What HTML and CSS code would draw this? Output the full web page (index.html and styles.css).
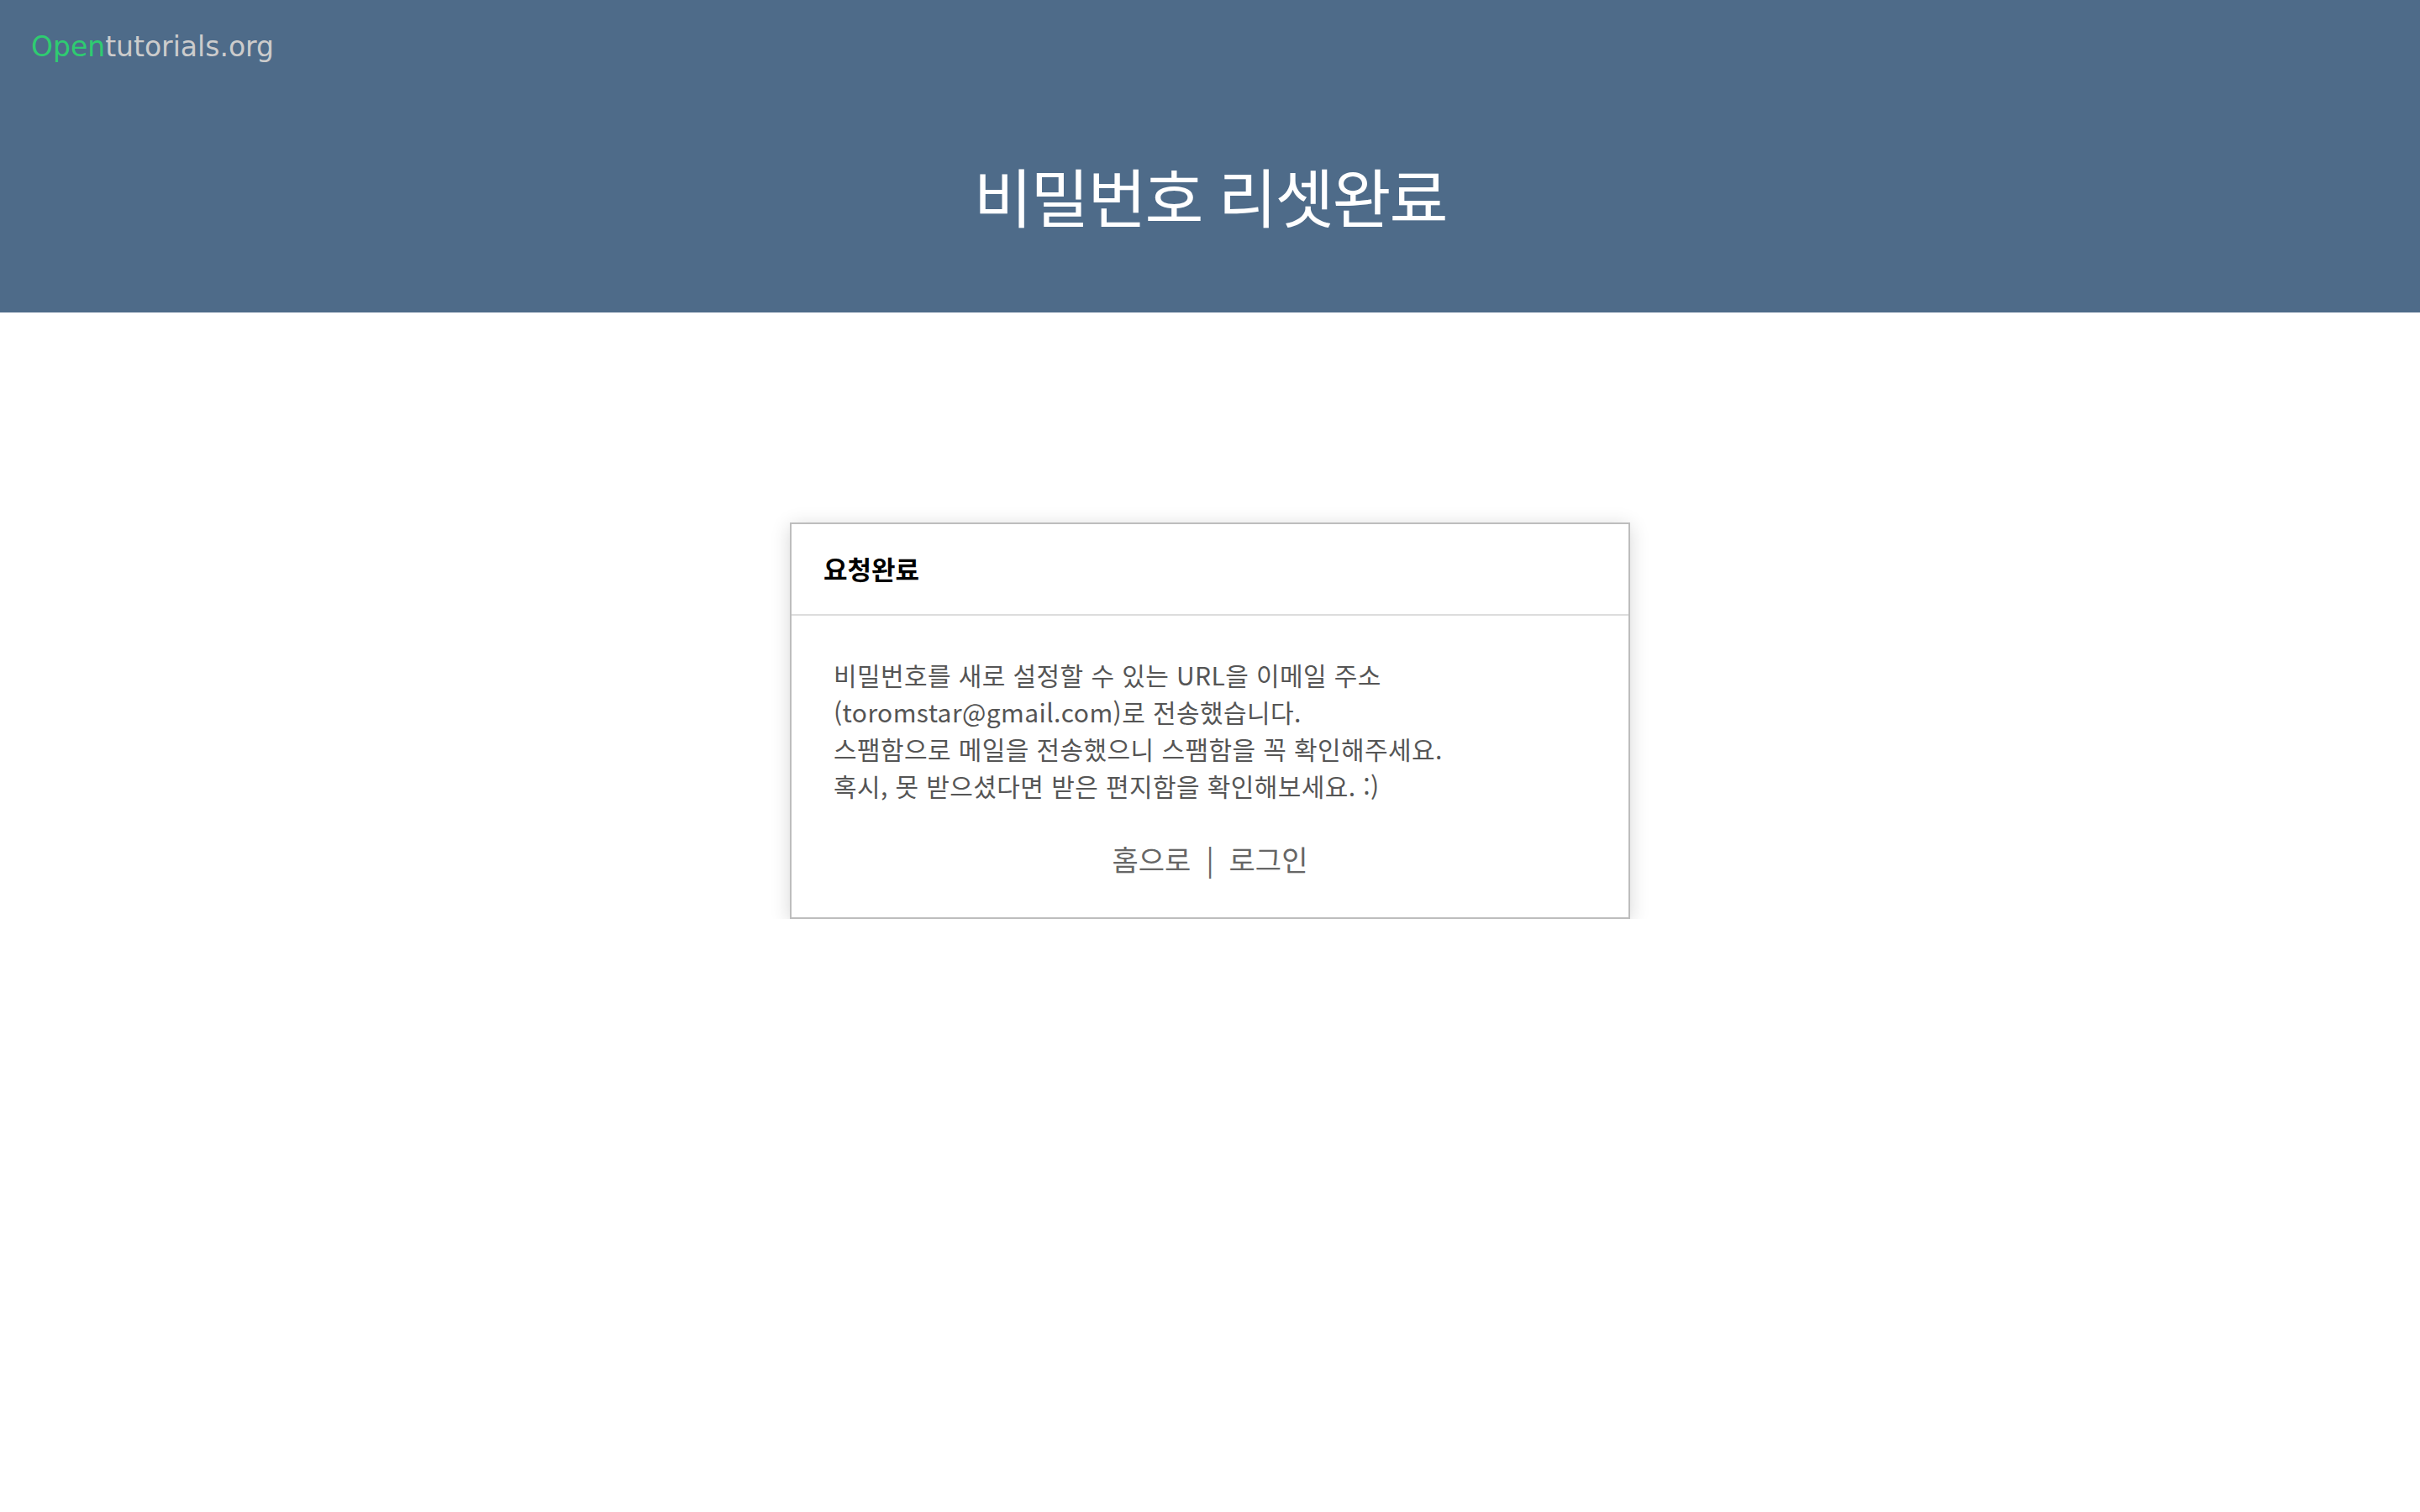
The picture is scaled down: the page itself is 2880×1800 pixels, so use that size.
FILE: index.html
```html
<!DOCTYPE html>
<html lang="ko">
<head>
<meta charset="utf-8">
<title>비밀번호 리셋완료</title>
<link rel="stylesheet" href="styles.css">
</head>
<body>
<header class="top">
  <div class="logo"><span class="logo-open">Open</span><span class="logo-rest">tutorials.org</span></div>
  <h1 class="title">비밀번호 리셋완료</h1>
</header>
<main class="main">
  <section class="card">
    <div class="card-head">요청완료</div>
    <div class="card-body">
      <p class="msg">비밀번호를 새로 설정할 수 있는 URL을 이메일 주소 (toromstar@gmail.com)로 전송했습니다.<br>스팸함으로 메일을 전송했으니 스팸함을 꼭 확인해주세요.<br>혹시, 못 받으셨다면 받은 편지함을 확인해보세요. :)</p>
      <div class="links"><a class="link" href="#">홈으로</a><span class="sep">|</span><a class="link" href="#">로그인</a></div>
    </div>
  </section>
</main>
</body>
</html>
```
FILE: styles.css
```css
html, body {
  margin: 0;
  padding: 0;
  background: #ffffff;
}
body {
  font-family: "Noto Sans CJK KR", "Noto Sans", sans-serif;
}
.top {
  box-sizing: border-box;
  height: 372px;
  background: #4e6b89;
  padding: 37px 37px 0;
}
.logo {
  font-family: "DejaVu Sans", sans-serif;
  font-size: 33px;
  line-height: 38px;
}
.logo-open {
  color: #2ecc71;
}
.logo-rest {
  color: #cccccc;
}
.title {
  margin: 119px 0 0;
  font-size: 76px;
  line-height: 76px;
  font-weight: 400;
  color: #ffffff;
  text-align: center;
  letter-spacing: -2px;
}
.main {
  display: flex;
  justify-content: center;
  padding-top: 250px;
}
.card {
  width: 1000px;
  box-sizing: border-box;
  border: 2px solid #bdbdbd;
  background: #ffffff;
  box-shadow: 0 4px 22px rgba(0, 0, 0, 0.16);
}
.card-head {
  padding: 33px 38px 34px;
  line-height: 40px;
  font-size: 31px;
  font-weight: 700;
  color: #000000;
  border-bottom: 2px solid #dddddd;
}
.card-body {
  padding: 48px 50px 45px;
}
.msg {
  margin: 0;
  font-size: 30px;
  line-height: 44px;
  color: #555555;
  letter-spacing: 0.4px;
  word-break: keep-all;
}
.links {
  margin-top: 42px;
  text-align: center;
  font-size: 34px;
  line-height: 48px;
  color: #666666;
}
.link {
  color: #666666;
  text-decoration: none;
}
.sep {
  margin: 0 18px;
  color: #666666;
}
```
